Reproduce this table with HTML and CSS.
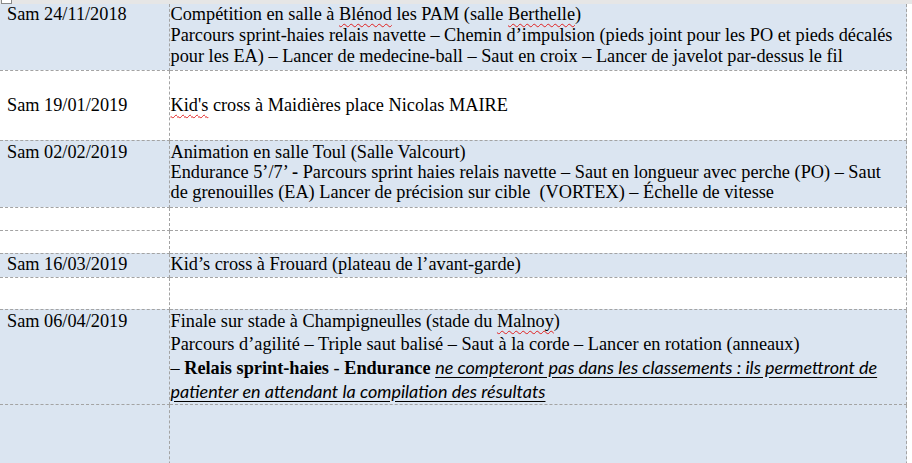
FILE: index.html
```html
<!DOCTYPE html>
<html lang="fr">
<head>
  <meta charset="UTF-8" />
  <title>Calendrier des rencontres</title>
  <link rel="stylesheet" href="styles.css">
</head>
<body>
  <div class="ruler"><span class="handle"></span></div>

  <table class="schedule">
    <colgroup>
      <col class="col-date">
      <col class="col-desc">
    </colgroup>
    <tr class="shade row-1">
      <td class="date">Sam 24/11/2018</td>
      <td class="desc">Compétition en salle à <span class="typo">Blénod</span> les PAM (salle <span class="typo">Berthelle</span>)<br>Parcours sprint-haies relais navette – Chemin d’impulsion (pieds joint pour les PO et pieds décalés pour les EA) – Lancer de medecine-ball – Saut en croix – Lancer de javelot par-dessus le fil</td>
    </tr>
    <tr class="row-2">
      <td class="date middle">Sam 19/01/2019</td>
      <td class="desc middle"><span class="typo">Kid's</span> cross à Maidières place Nicolas MAIRE</td>
    </tr>
    <tr class="shade row-3">
      <td class="date">Sam 02/02/2019</td>
      <td class="desc">Animation en salle Toul (Salle Valcourt)<br>Endurance 5’/7’ <b>-</b> Parcours sprint haies relais navette – Saut en longueur avec perche (PO) – Saut de grenouilles (EA) Lancer de précision sur cible&nbsp; (VORTEX) – Échelle de vitesse</td>
    </tr>
    <tr class="row-4">
      <td class="date"></td>
      <td class="desc"></td>
    </tr>
    <tr class="row-5">
      <td class="date"></td>
      <td class="desc"></td>
    </tr>
    <tr class="shade row-6">
      <td class="date">Sam 16/03/2019</td>
      <td class="desc">Kid’s cross à Frouard (plateau de l’avant-garde)</td>
    </tr>
    <tr class="row-7">
      <td class="date"></td>
      <td class="desc"></td>
    </tr>
    <tr class="shade row-8">
      <td class="date">Sam 06/04/2019</td>
      <td class="desc">Finale sur stade à Champigneulles (stade du <span class="typo">Malnoy</span>)<br>Parcours d’agilité – Triple saut balisé – Saut à la corde – Lancer en rotation (anneaux)<br>– <b>Relais sprint-haies</b> - <b>Endurance</b> <span class="note">ne compteront pas dans les classements : ils permettront de patienter en attendant la compilation des résultats</span></td>
    </tr>
    <tr class="shade row-9">
      <td class="date"></td>
      <td class="desc"></td>
    </tr>
  </table>
</body>
</html>
```

FILE: styles.css
```css
* {
  box-sizing: border-box;
}

body {
  margin: 0;
  background: #fff;
  color: #000;
  font-family: "Liberation Serif", "Times New Roman", serif;
  font-size: 18.3px;
  overflow: hidden;
}

.ruler {
  height: 4px;
  background: #e6e6e6;
  display: flex;
}

.handle {
  width: 11px;
  height: 4px;
  margin-left: 1px;
  background: #fff;
  border: 1px solid #8a8a8a;
  border-top: none;
}

.schedule {
  border-collapse: collapse;
  table-layout: fixed;
  width: 907px;
}

.col-date {
  width: 169px;
}

.schedule td {
  padding: 0;
  border: 1px dashed #a3a3a3;
  vertical-align: top;
  line-height: 21px;
}

.schedule tr:first-child td {
  border-top: none;
}

.schedule .date {
  border-left: none;
  padding-left: 7px;
}

.schedule .desc {
  padding-left: 1px;
  padding-right: 8px;
}

.schedule .middle {
  vertical-align: middle;
}

.shade td {
  background: #dbe5f1;
}

.row-1 { height: 66px; }
.row-2 { height: 70px; }
.row-3 { height: 67px; }
.row-3 td { line-height: 20px; padding-top: 1px; }
.row-4 { height: 23px; }
.row-5 { height: 23px; }
.row-6 { height: 24px; }
.row-7 { height: 32px; }
.row-8 { height: 94px; }
.row-8 td { line-height: 23px; }
.row-9 { height: 80px; }

.typo {
  text-decoration: underline wavy #e02020;
  text-decoration-thickness: 1px;
  text-underline-offset: 3px;
  text-decoration-skip-ink: none;
}

.note {
  font-family: Lato, "Liberation Sans", sans-serif;
  font-style: italic;
  font-size: 18px;
  text-decoration: underline;
  text-underline-offset: 3px;
}
```
